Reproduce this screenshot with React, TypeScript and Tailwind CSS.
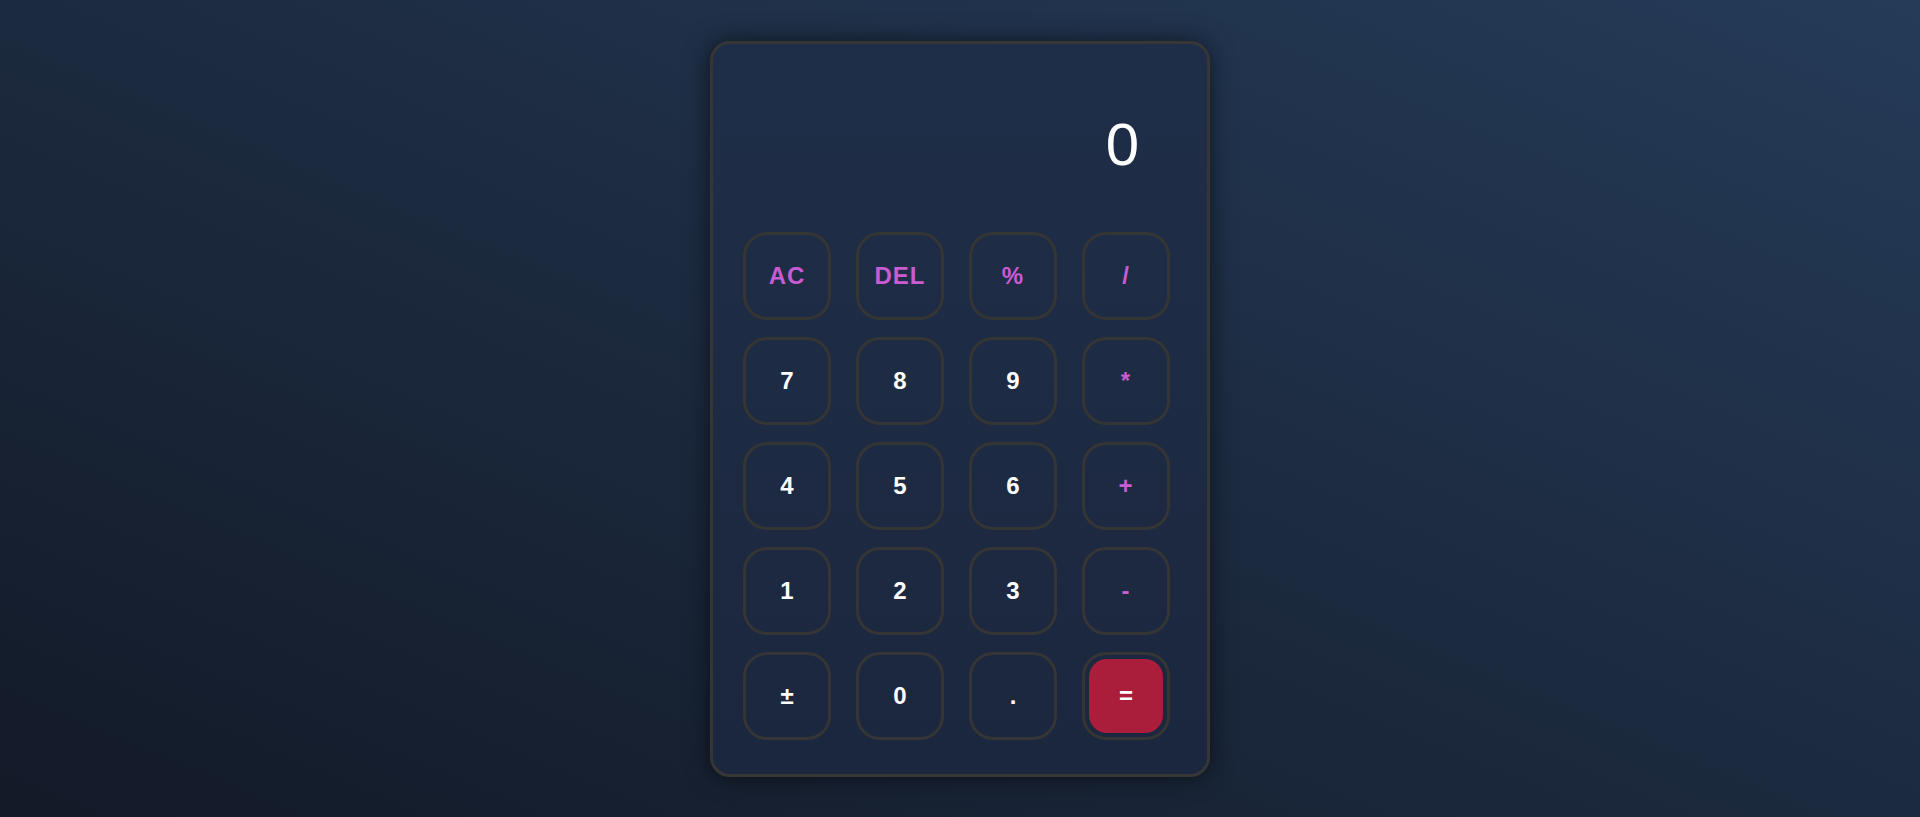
import React, { useState } from 'react';

type Key = { label: string; kind: 'num' | 'op' | 'eq' };

const KEYS: Key[] = [
  { label: 'AC', kind: 'op' },
  { label: 'DEL', kind: 'op' },
  { label: '%', kind: 'op' },
  { label: '/', kind: 'op' },
  { label: '7', kind: 'num' },
  { label: '8', kind: 'num' },
  { label: '9', kind: 'num' },
  { label: '*', kind: 'op' },
  { label: '4', kind: 'num' },
  { label: '5', kind: 'num' },
  { label: '6', kind: 'num' },
  { label: '+', kind: 'op' },
  { label: '1', kind: 'num' },
  { label: '2', kind: 'num' },
  { label: '3', kind: 'num' },
  { label: '-', kind: 'op' },
  { label: '±', kind: 'num' },
  { label: '0', kind: 'num' },
  { label: '.', kind: 'num' },
  { label: '=', kind: 'eq' },
];

const App: React.FC = () => {
  const [display] = useState('0');

  return (
    <div className="min-h-screen flex items-center justify-center bg-linear-to-tr from-[#131a28] to-[#253b58] font-['Liberation_Sans',Arial,sans-serif]">
      {/* calculator card */}
      <div className="w-[500px] rounded-[20px] border-[3px] border-[#363636] bg-linear-to-b from-[#1f2e48] to-[#1b273e] shadow-[0_0_24px_rgba(0,0,0,0.55)] pt-[71px] pb-[34px]">
        {/* display */}
        <div className="h-[60px] pr-[68px] text-right text-[60px] leading-none text-white">{display}</div>

        {/* keypad */}
        <div className="mt-[57px] grid grid-cols-[repeat(4,88px)] gap-x-[25px] gap-y-[17px] pl-[30px]">
          {KEYS.map((k) =>
            k.kind === 'eq' ? (
              <button
                key={k.label}
                type="button"
                className="w-[88px] h-[88px] rounded-3xl border-[3px] border-[#353535] p-1"
              >
                <span className="flex w-full h-full items-center justify-center rounded-[18px] bg-[#aa1e3b] text-2xl font-bold text-white">
                  {k.label}
                </span>
              </button>
            ) : (
              <button
                key={k.label}
                type="button"
                className={`w-[88px] h-[88px] rounded-3xl border-[3px] border-[#353535] flex items-center justify-center text-2xl font-bold ${
                  k.kind === 'op' ? 'text-[#c95bd3] tracking-[1px]' : 'text-white'
                }`}
              >
                {k.label}
              </button>
            ),
          )}
        </div>
      </div>
    </div>
  );
};

export default App;
